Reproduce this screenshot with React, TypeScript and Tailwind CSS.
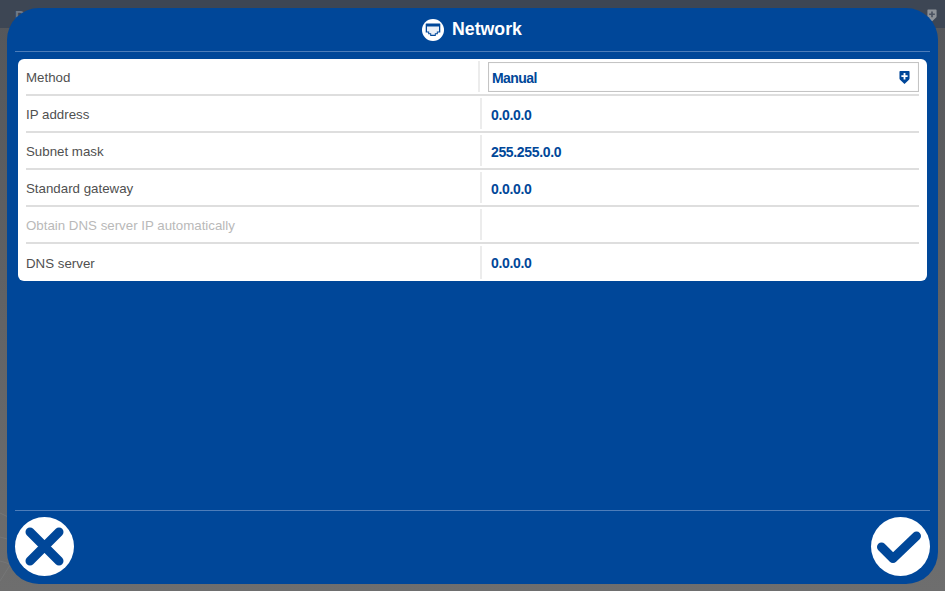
import { ReactNode } from "react";

const BLUE = "text-[#004799]";

function ShieldPlus({ className, plus = "#fff" }: { className?: string; plus?: string }) {
  return (
    <svg viewBox="0 0 12 15" className={className}>
      <path d="M0.5 1.2 Q0.5 0.4 1.3 0.4 H10.7 Q11.5 0.4 11.5 1.2 V8.6 Q11.5 9.6 10.6 10.3 L6 14.6 L1.4 10.3 Q0.5 9.6 0.5 8.6 Z" fill="currentColor" />
      <path d="M6 2.6 V9.6 M2.6 6 H9.4" stroke={plus} strokeWidth="2" fill="none" />
    </svg>
  );
}

function NetworkIcon() {
  return (
    <svg viewBox="0 0 22 22" className="w-[22px] h-[22px]">
      <circle cx="11" cy="11" r="11" fill="#fff" />
      <path d="M3.7 5 Q3.7 4.4 4.3 4.4 H17.7 Q18.3 4.4 18.3 5 V13.5 H15.8 V15.3 H13.8 V17 H8.2 V15.3 H6.2 V13.5 H3.7 Z" fill="#004799" />
      <path d="M5 7.6 H17 V12.4 H14.8 V14.2 H12.8 V15.8 H9.2 V14.2 H7.2 V12.4 H5 Z" fill="#fff" fillOpacity="0.92" />
    </svg>
  );
}

function Row({ label, value, disabled, last, children }: { label: string; value?: string; disabled?: boolean; last?: boolean; children?: ReactNode }) {
  return (
    <div className={`flex items-stretch mx-2 h-[37px] ${last ? "" : "border-b-2 border-[#dedede]"}`}>
      <div className={`w-[454px] flex items-center text-[13.3px] ${last ? "pt-[2px]" : "pt-[3px]"} ${disabled ? "text-[#b9b9b9]" : "text-[#505050]"}`}>{label}</div>
      <div className={`flex-1 flex items-center pl-[9px] border-l-2 border-[#ececec] my-[2px] ${children ? "pt-[1px]" : last ? "pt-[1px]" : "pt-[3px]"}`}>
        {children ?? <span className={`text-[14px] font-bold tracking-[-0.35px] ${BLUE}`}>{value}</span>}
      </div>
    </div>
  );
}

export default function App() {
  return (
    <div className="relative w-[945px] h-[591px] overflow-hidden bg-gradient-to-b from-[#54565a] to-[#6e6e6e] font-['Liberation_Sans',Arial,sans-serif]">
      {/* page behind the dialog */}
      <div className="h-[28px] bg-[#3d4654] flex items-start justify-between pl-[15px] pr-[8px] pt-[9px] text-[#727a88] text-sm font-bold leading-none">
        <span>P</span>
        <ShieldPlus className="w-[10px] h-[13px] text-[#8d9298]" plus="#4a5260" />
      </div>
      <svg viewBox="0 0 60 100" className="absolute left-0 bottom-0 w-[60px] h-[100px]" fill="none" stroke="#77787a" strokeWidth="0.8">
        <path d="M0 22 Q20 30 34 50 M0 46 Q24 50 40 74 M0 70 Q14 72 26 90 M0 90 Q16 60 44 48" />
      </svg>

      {/* dialog */}
      <div className="absolute left-[7px] top-2 w-[931px] h-[576px] rounded-[32px] bg-[#004799] flex flex-col px-2">
        <div className="h-[44px] flex items-center justify-center gap-2 pr-[1px] border-b border-[#4d7dba] text-white text-[17.7px] font-bold shrink-0">
          <NetworkIcon />
          <span>Network</span>
        </div>

        <div className="mt-[7px] ml-[3px] w-[909px] h-[222px] bg-white rounded-[6px] overflow-hidden">
          <Row label="Method">
            <div className="-ml-[1px] w-[431px] h-[30px] border border-[#c4c4c4] flex items-center justify-between pl-[3px] pr-[8px] -mt-[1px] shadow-[inset_0_0_1px_#ddd]">
              <span className={`mt-[3px] text-[14px] font-bold tracking-[-0.55px] ${BLUE}`}>Manual</span>
              <ShieldPlus className={`mt-[2px] w-[11px] h-[15px] ${BLUE}`} />
            </div>
          </Row>
          <Row label="IP address" value="0.0.0.0" />
          <Row label="Subnet mask" value="255.255.0.0" />
          <Row label="Standard gateway" value="0.0.0.0" />
          <Row label="Obtain DNS server IP automatically" disabled value="" />
          <Row label="DNS server" value="0.0.0.0" last />
        </div>

        <div className="flex-1" />

        <div className="h-[74px] border-t border-[#4d7dba] shrink-0 flex items-start justify-between pt-[6px]">
          <button className="w-[59px] h-[59px] rounded-full bg-white flex items-center justify-center">
            <svg viewBox="0 0 59 59" className="w-[59px] h-[59px]">
              <path d="M15 15 L44 44 M44 15 L15 44" stroke="#004799" strokeWidth="9" strokeLinecap="round" fill="none" />
            </svg>
          </button>
          <button className="w-[59px] h-[59px] rounded-full bg-white flex items-center justify-center">
            <svg viewBox="0 0 59 59" className="w-[59px] h-[59px]">
              <path d="M10.5 30 L22 41.5 L45.5 19" stroke="#004799" strokeWidth="9" strokeLinecap="round" strokeLinejoin="round" fill="none" />
            </svg>
          </button>
        </div>
      </div>
    </div>
  );
}
